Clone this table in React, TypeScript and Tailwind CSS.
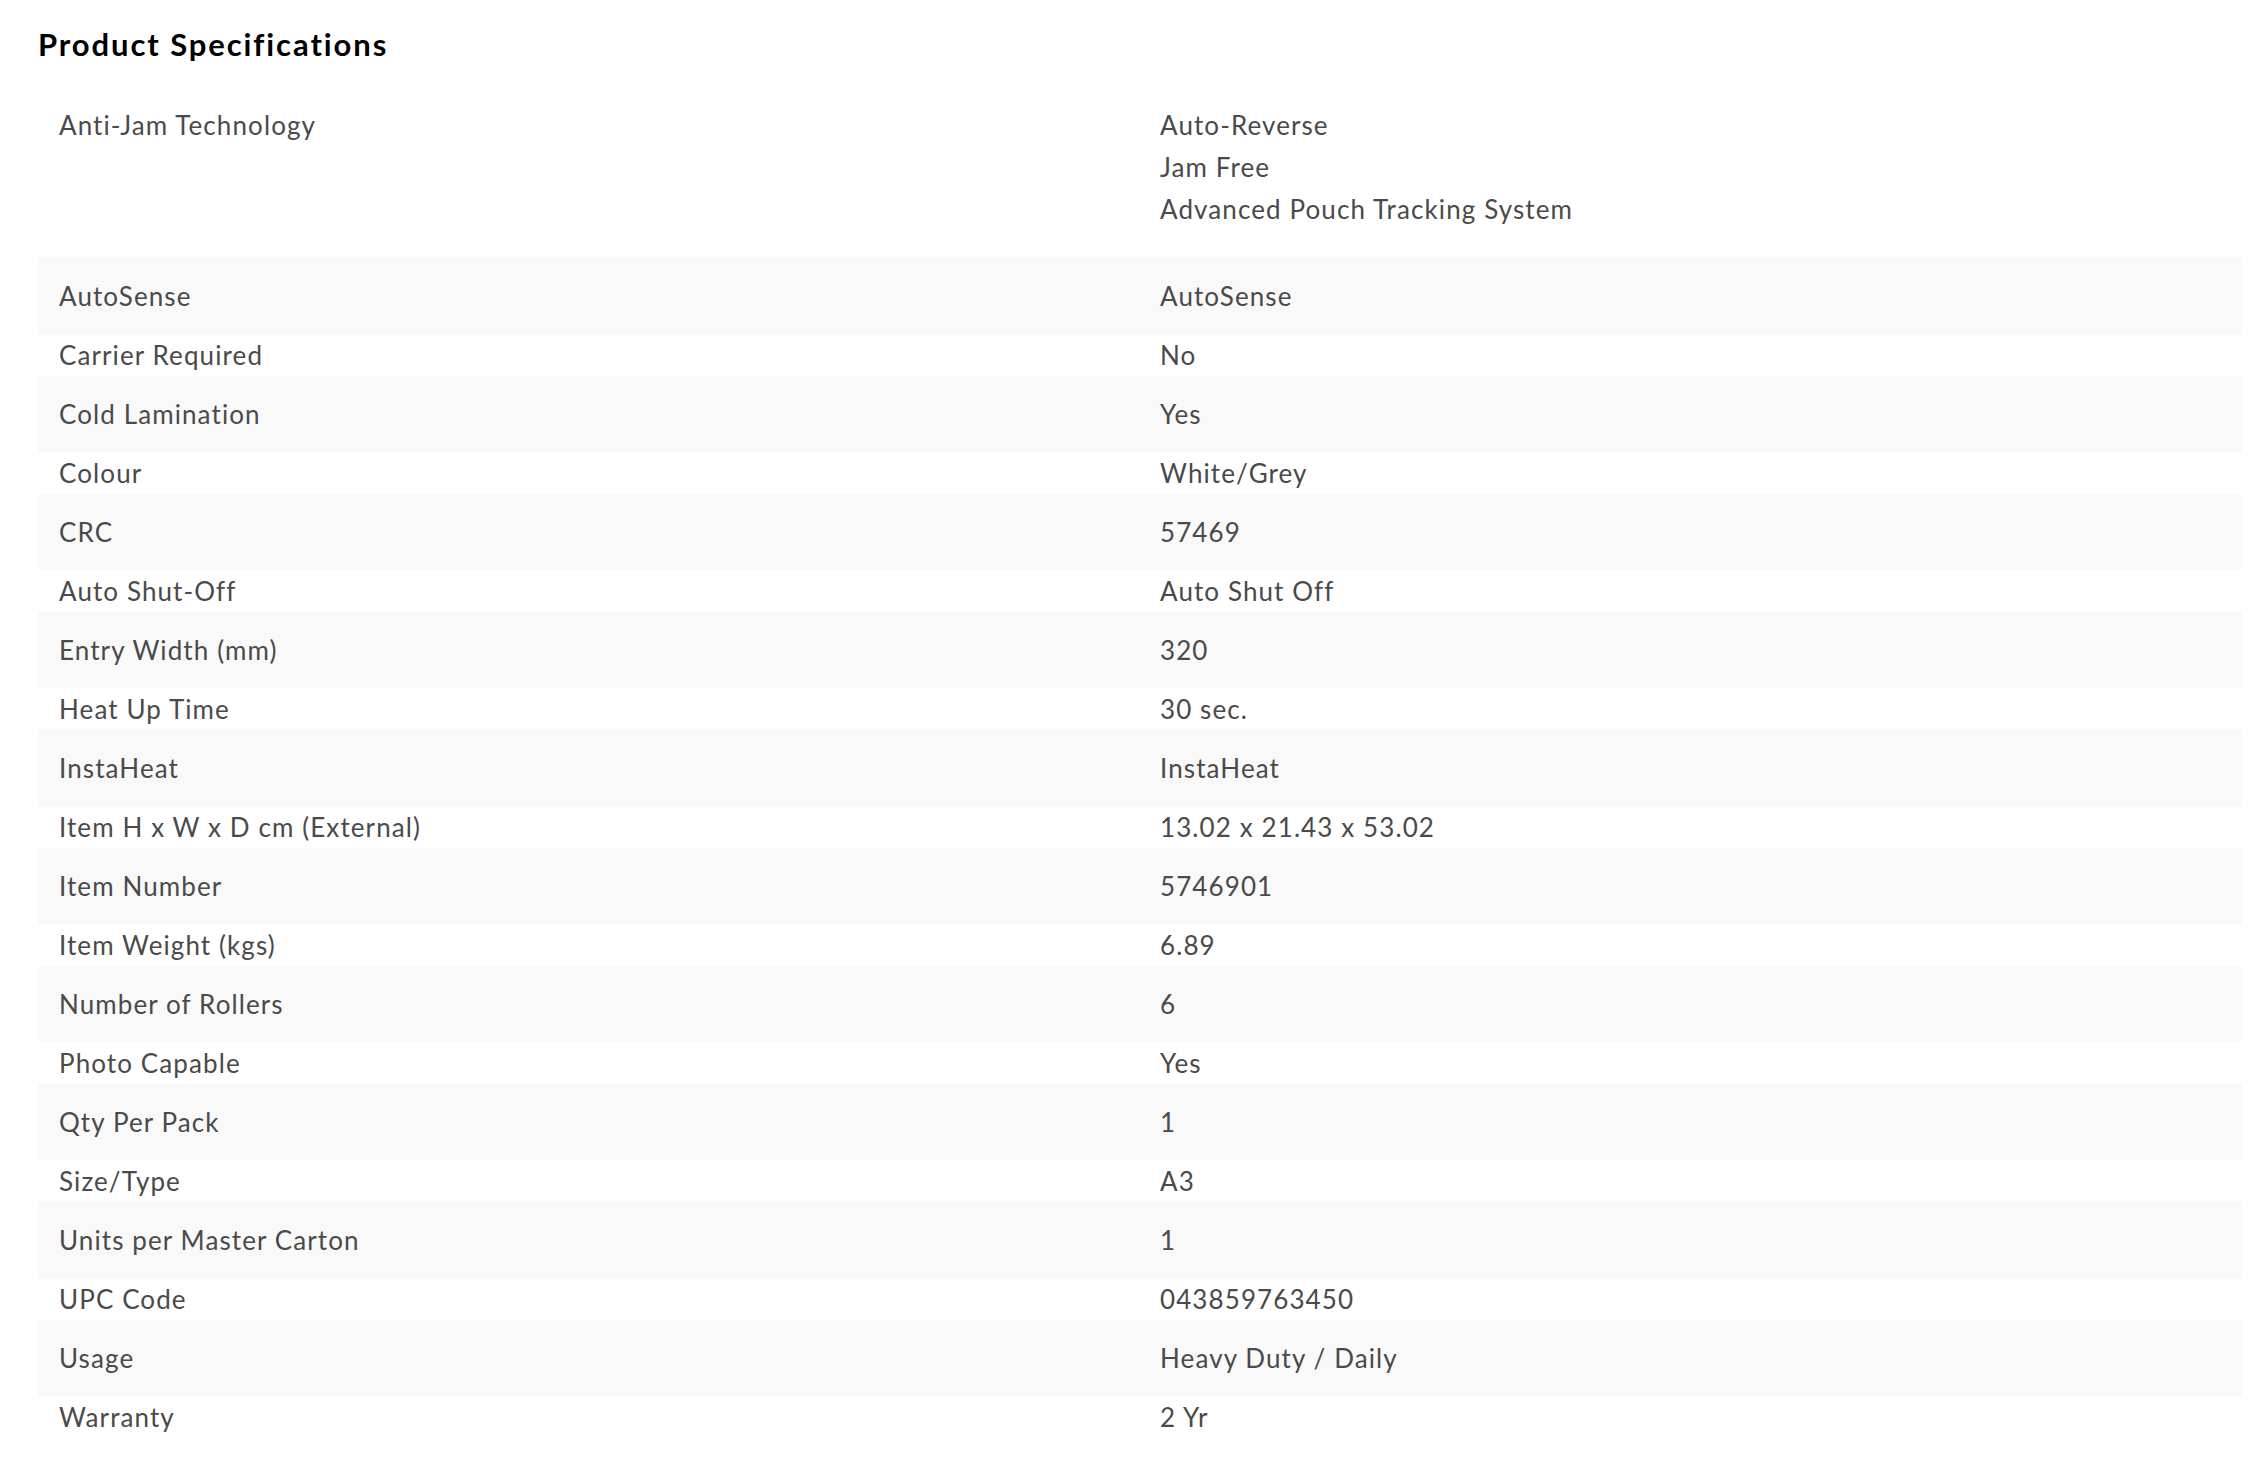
import React from "react";

const rows: [string, string][] = [
  ["AutoSense", "AutoSense"],
  ["Carrier Required", "No"],
  ["Cold Lamination", "Yes"],
  ["Colour", "White/Grey"],
  ["CRC", "57469"],
  ["Auto Shut-Off", "Auto Shut Off"],
  ["Entry Width (mm)", "320"],
  ["Heat Up Time", "30 sec."],
  ["InstaHeat", "InstaHeat"],
  ["Item H x W x D cm (External)", "13.02 x 21.43 x 53.02"],
  ["Item Number", "5746901"],
  ["Item Weight (kgs)", "6.89"],
  ["Number of Rollers", "6"],
  ["Photo Capable", "Yes"],
  ["Qty Per Pack", "1"],
  ["Size/Type", "A3"],
  ["Units per Master Carton", "1"],
  ["UPC Code", "043859763450"],
  ["Usage", "Heavy Duty / Daily"],
  ["Warranty", "2 Yr"],
];

export default function App() {
  return (
    <div
      className="min-h-screen bg-white pl-[38px] pr-[6px] pt-[23px] text-[#4a4a4a]"
      style={{ fontFamily: "Lato, 'Open Sans', sans-serif" }}
    >
      <h2 className="text-[31px] font-bold leading-[42px] tracking-[1.9px] text-black">Product Specifications</h2>
      <div className="mt-[39px] text-[26px] leading-[42px] tracking-[1.1px]">
        <div className="grid grid-cols-2 pb-[28px]">
          <div className="pl-[21px]">Anti-Jam Technology</div>
          <div className="flex flex-col pl-[20px]">
            <span>Auto-Reverse</span>
            <span>Jam Free</span>
            <span>Advanced Pouch Tracking System</span>
          </div>
        </div>
        {rows.map(([k, v], i) => (
          <div
            key={k}
            className={
              i % 2 === 0
                ? "grid h-[76px] grid-cols-2 items-center bg-[#f9f9f9]"
                : "grid h-[42px] grid-cols-2 items-center bg-white"
            }
          >
            <div className="pl-[21px]">{k}</div>
            <div className="pl-[20px]">{v}</div>
          </div>
        ))}
      </div>
    </div>
  );
}
